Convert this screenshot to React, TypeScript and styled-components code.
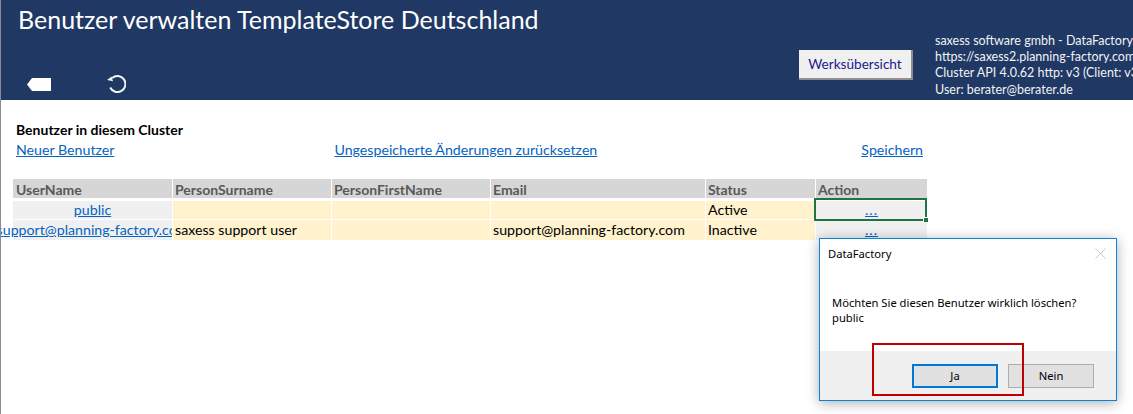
import React from "react";
import styled, { createGlobalStyle } from "styled-components";

const GlobalStyle = createGlobalStyle`
  html, body {
    margin: 0;
    padding: 0;
    background: #fff;
  }
  body {
    font-family: Lato, "Open Sans", sans-serif;
    overflow: hidden;
  }
`;

const Page = styled.div`
  position: relative;
  width: 1133px;
  height: 414px;
  box-sizing: border-box;
  border-left: 1px solid #8c8c8c;
  overflow: hidden;
`;

const Header = styled.header`
  height: 100px;
  background: #1f3864;
  display: flex;
  color: #fff;
`;

const HeaderMain = styled.div`
  flex: none;
  width: 798px;
  padding-left: 17px;
  box-sizing: border-box;
`;

const Title = styled.h1`
  margin: 0;
  padding-top: 4px;
  font-size: 25px;
  line-height: 30px;
  font-weight: 400;
  white-space: nowrap;
  color: #fff;
`;

const ToolIcons = styled.div`
  display: flex;
  align-items: center;
  gap: 56px;
  padding: 41px 0 0 9px;
`;

const ButtonSlot = styled.div`
  flex: none;
  width: 135px;
  padding-top: 50px;
  box-sizing: border-box;
`;

const PlantButton = styled.button`
  width: 114px;
  height: 30px;
  padding: 0;
  border: 0;
  border-right: 2px solid #8e8e8e;
  border-bottom: 2px solid #8e8e8e;
  background: #f0f0f0;
  color: #1a1a8c;
  font-family: inherit;
  font-size: 13.6px;
`;

const Info = styled.div`
  flex: none;
  padding: 33px 0 0 1px;
  font-size: 12.5px;
  line-height: 16.2px;
  white-space: nowrap;
  color: #f2f2f2;
`;

const Content = styled.main`
  padding: 22px 0 0 12px;
  width: 926px;
  box-sizing: border-box;
`;

const SectionTitle = styled.div`
  padding-left: 3px;
  font-size: 14px;
  line-height: 15px;
  font-weight: 700;
  color: #000;
`;

const LinkRow = styled.div`
  display: flex;
  padding: 5px 4px 0 3px;
  height: 42px;
  box-sizing: border-box;
`;

const TextLink = styled.a`
  font-size: 14.2px;
  line-height: 15px;
  color: #0563c1;
  text-decoration: underline;
  white-space: nowrap;
`;

const ResetLink = styled(TextLink)`
  margin-left: 220px;
`;

const SaveLink = styled(TextLink)`
  margin-left: auto;
`;

const Table = styled.div`
  display: grid;
  grid-template-columns: 159px 158px 158px 214px 109px 111px;
  column-gap: 1px;
  width: 914px;
`;

const HeadCell = styled.div`
  height: 19px;
  margin-bottom: 3px;
  padding-left: 2px;
  background: #d6d6d6;
  color: #595959;
  font-size: 14px;
  font-weight: 700;
  line-height: 22px;
  white-space: nowrap;

  &:first-child {
    padding-left: 3px;
  }
`;

const Cell = styled.div<{ $tall?: boolean }>`
  height: ${(p) => (p.$tall ? "20px" : "18px")};
  margin-bottom: ${(p) => (p.$tall ? "0" : "1px")};
  padding-left: 2px;
  background: #fff2cc;
  color: #000;
  font-size: 14.2px;
  line-height: ${(p) => (p.$tall ? "20px" : "18px")};
  white-space: nowrap;
`;

const LinkCell = styled.div<{ $tall?: boolean }>`
  height: ${(p) => (p.$tall ? "20px" : "18px")};
  margin-bottom: ${(p) => (p.$tall ? "0" : "1px")};
  line-height: ${(p) => (p.$tall ? "20px" : "18px")};
  background: #f0f0f0;
  display: flex;
  justify-content: center;
  white-space: nowrap;
  clip-path: inset(0 0 0 -20px);
`;

const LinkText = styled.a`
  flex: none;
  font-size: 14.2px;
  color: #0563c1;
  text-decoration: underline;
`;

const DotsLink = styled(LinkText)`
  letter-spacing: 1px;
`;

const ActionSelection = styled.div`
  position: absolute;
  left: 813px;
  top: 198px;
  width: 109px;
  height: 19px;
  border: 2px solid #217346;
`;

const SelectionHandle = styled.span`
  position: absolute;
  right: -3px;
  bottom: -3px;
  width: 4px;
  height: 4px;
  background: #217346;
  border-left: 1px solid #fff;
  border-top: 1px solid #fff;
`;

const Dialog = styled.div`
  position: absolute;
  left: 818px;
  top: 238px;
  width: 298px;
  height: 163px;
  box-sizing: border-box;
  border: 1px solid #0a84d8;
  background: #fff;
  box-shadow: 0 2px 12px rgba(0, 0, 0, 0.32);
  display: flex;
  flex-direction: column;
  font-family: "Noto Sans", sans-serif;
  color: #000;
`;

const DialogTitleBar = styled.div`
  display: flex;
  align-items: center;
  justify-content: space-between;
  height: 28px;
  padding: 0 10px 0 8px;
  font-size: 11.2px;
`;

const DialogMessage = styled.div`
  flex: 1;
  padding: 29px 0 0 12px;
  font-size: 11.2px;
  line-height: 14.5px;
`;

const DialogFooter = styled.div`
  height: 49px;
  box-sizing: border-box;
  padding: 13px 22px 0 0;
  background: #f0f0f0;
  display: flex;
  justify-content: flex-end;
  gap: 10px;
`;

const DialogButton = styled.button<{ $focused?: boolean }>`
  width: 86px;
  height: 24px;
  padding: 0 0 2px;
  box-sizing: border-box;
  background: #e1e1e1;
  border: ${(p) => (p.$focused ? "2px solid #0078d7" : "1px solid #adadad")};
  color: #000;
  font-family: inherit;
  font-size: 11.2px;
`;

const Highlight = styled.div`
  position: absolute;
  left: 871px;
  top: 343px;
  width: 148px;
  height: 49px;
  border: 2px solid #c00000;
  pointer-events: none;
`;

const BackIcon = () => (
  <svg width="24" height="13" viewBox="0 0 24 13">
    <path d="M5 0H24V13H5L0 6.5Z" fill="#fff" />
  </svg>
);

const ReloadIcon = () => (
  <svg width="19" height="18" viewBox="0 0 19 18" fill="none">
    <path d="M5.2 3A8 8 0 1 1 3.2 12.5" stroke="#f4f4f4" strokeWidth="2" />
    <path d="M0 5L4.6 1.4L6 6.2Z" fill="#f4f4f4" />
  </svg>
);

const CloseIcon = () => (
  <svg width="11" height="11" viewBox="0 0 11 11" stroke="#c9c9c9" strokeWidth="1">
    <path d="M0.5 0.5L10.5 10.5M10.5 0.5L0.5 10.5" />
  </svg>
);

export default function App() {
  return (
    <>
      <GlobalStyle />
      <Page>
        <Header>
          <HeaderMain>
            <Title>Benutzer verwalten TemplateStore Deutschland</Title>
            <ToolIcons>
              <BackIcon />
              <ReloadIcon />
            </ToolIcons>
          </HeaderMain>
          <ButtonSlot>
            <PlantButton>Werksübersicht</PlantButton>
          </ButtonSlot>
          <Info>
            saxess software gmbh - DataFactory
            <br />
            https://saxess2.planning-factory.com
            <br />
            Cluster API 4.0.62 http: v3 (Client: v3)
            <br />
            User: berater@berater.de
          </Info>
        </Header>
        <Content>
          <SectionTitle>Benutzer in diesem Cluster</SectionTitle>
          <LinkRow>
            <TextLink>Neuer Benutzer</TextLink>
            <ResetLink>Ungespeicherte Änderungen zurücksetzen</ResetLink>
            <SaveLink>Speichern</SaveLink>
          </LinkRow>
          <Table>
            <HeadCell>UserName</HeadCell>
            <HeadCell>PersonSurname</HeadCell>
            <HeadCell>PersonFirstName</HeadCell>
            <HeadCell>Email</HeadCell>
            <HeadCell>Status</HeadCell>
            <HeadCell>Action</HeadCell>

            <LinkCell>
              <LinkText>public</LinkText>
            </LinkCell>
            <Cell />
            <Cell />
            <Cell />
            <Cell>Active</Cell>
            <LinkCell>
              <DotsLink>...</DotsLink>
            </LinkCell>

            <LinkCell $tall>
              <LinkText>support@planning-factory.com</LinkText>
            </LinkCell>
            <Cell $tall>saxess support user</Cell>
            <Cell $tall />
            <Cell $tall>support@planning-factory.com</Cell>
            <Cell $tall>Inactive</Cell>
            <LinkCell $tall>
              <DotsLink>...</DotsLink>
            </LinkCell>
          </Table>
        </Content>
        <ActionSelection>
          <SelectionHandle />
        </ActionSelection>
        <Dialog>
          <DialogTitleBar>
            DataFactory
            <CloseIcon />
          </DialogTitleBar>
          <DialogMessage>
            Möchten Sie diesen Benutzer wirklich löschen?
            <br />
            public
          </DialogMessage>
          <DialogFooter>
            <DialogButton $focused>Ja</DialogButton>
            <DialogButton>Nein</DialogButton>
          </DialogFooter>
        </Dialog>
        <Highlight />
      </Page>
    </>
  );
}
